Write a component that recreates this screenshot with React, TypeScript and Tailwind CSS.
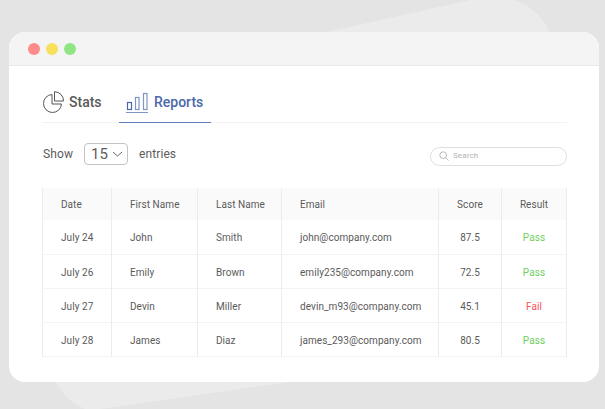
import React from 'react';

const rows = [
  { date: 'July 24', first: 'John', last: 'Smith', email: 'john@company.com', score: '87.5', result: 'Pass' },
  { date: 'July 26', first: 'Emily', last: 'Brown', email: 'emily235@company.com', score: '72.5', result: 'Pass' },
  { date: 'July 27', first: 'Devin', last: 'Miller', email: 'devin_m93@company.com', score: '45.1', result: 'Fail' },
  { date: 'July 28', first: 'James', last: 'Diaz', email: 'james_293@company.com', score: '80.5', result: 'Pass' },
];

const PieIcon = () => (
  <svg width="22" height="22" viewBox="0 0 22 22" fill="none" stroke="#555" strokeWidth="1">
    <path d="M9 3.500a9 9 0 1 0 9.500 9.500h-9.500z" />
    <path d="M11.500 0.700a9 9 0 0 1 9 9.300h-9z" />
  </svg>
);

const BarsIcon = () => (
  <svg width="23" height="21" viewBox="0 0 23 21" fill="none" stroke="#4a68a8" strokeWidth="1.200">
    <rect x="1.500" y="10.500" width="4" height="7" />
    <rect x="9.500" y="5.500" width="3.500" height="12" stroke="#7f94c2" />
    <rect x="17.500" y="1.500" width="3.500" height="16" stroke="#7f94c2" />
    <path d="M0 20.500h22" stroke="#7f94c2" />
  </svg>
);

export default function App() {
  return (
    <div className="relative w-[605px] h-[409px] overflow-hidden bg-[#e4e4e4] pt-[32px] pl-[9px] font-['Roboto',sans-serif]">
      {/* big pale shape behind the window */}
      <svg className="absolute left-0 top-0" width="605" height="409" viewBox="0 0 605 409">
        <path d="M300 38L470 0h45Q545 12 552 40V382H290L100 409H85Q64 400 55 380Z" fill="#ebebeb" />
      </svg>

      <div className="relative w-[590px] h-[350px] rounded-[16px] bg-white overflow-hidden">
        <div className="h-[34px] bg-[#f4f4f4] border-b border-[#e8e8e8] flex items-center gap-[6px] pl-[19px] pt-[1px]">
          <span className="w-[12px] h-[12px] rounded-full bg-[#ff8a8a]" />
          <span className="w-[12px] h-[12px] rounded-full bg-[#f6e05e]" />
          <span className="w-[12px] h-[12px] rounded-full bg-[#90e585]" />
        </div>

        <div className="pl-[33px] pr-[32px]">
          <div className="h-[57px] border-b border-[#f2f2f2] flex items-end">
            <div className="flex items-center gap-[4px] h-[57px] w-[77px] pl-[1px] pt-[17px] text-[14px] font-medium text-[#5a5a5a]">
              <PieIcon />
              <span className="pt-[1px]">Stats</span>
            </div>
            <div className="flex items-center gap-[5px] h-[58px] -mb-px w-[92px] pl-[7px] pt-[17px] border-b-[1.5px] border-[#5f7db8] text-[14px] font-medium text-[#4a68a8]">
              <BarsIcon />
              <span className="pt-[1px]">Reports</span>
            </div>
          </div>

          <div className="flex items-center justify-between h-[65px] pb-[3px] text-[12px] text-[#5c5c5c] tracking-[0.1px]">
            <div className="flex items-center">
              <span className="w-[42px] pl-[1px]">Show</span>
              <div className="flex items-center justify-between w-[44px] h-[22px] rounded-[4px] border border-[#c4c4c4] pl-[6px] pr-[4px] text-[15px]">
                <span>15</span>
                <svg width="11" height="10" viewBox="0 0 11 10" fill="none" stroke="#666" strokeWidth="1"><path d="M1 3l4.500 4 4.500-4" /></svg>
              </div>
              <span className="ml-[11px]">entries</span>
            </div>
            <div className="flex items-center gap-[4px] w-[137px] h-[19px] mt-[4px] rounded-full border border-[#dfdfdf] pl-[8px] text-[8px] text-[#b4b4b4]">
              <svg width="10" height="10" viewBox="0 0 10 10" fill="none" stroke="#aaa" strokeWidth="0.800"><circle cx="4.200" cy="4.200" r="3.400" /><path d="M6.800 6.800L9.500 9.500" /></svg>
              <span>Search</span>
            </div>
          </div>

          <table className="table-fixed border-collapse w-[524px] text-[10px] text-[#5a5a5a] tracking-[0.06px]">
            <colgroup>
              <col className="w-[69px]" />
              <col className="w-[86px]" />
              <col className="w-[84px]" />
              <col className="w-[157px]" />
              <col className="w-[63px]" />
              <col className="w-[65px]" />
            </colgroup>
            <thead>
              <tr className="h-[32px] bg-[#fafafa]">
                <th className="border-x border-[#ececec] pl-[18px] pt-[1px] text-left font-normal">Date</th>
                <th className="border-x border-[#ececec] pl-[18px] pt-[1px] text-left font-normal">First Name</th>
                <th className="border-x border-[#ececec] pl-[18px] pt-[1px] text-left font-normal">Last Name</th>
                <th className="border-x border-[#ececec] pl-[18px] pt-[1px] text-left font-normal">Email</th>
                <th className="border-x border-[#ececec] pt-[1px] text-center font-normal">Score</th>
                <th className="border-x border-[#ececec] pt-[1px] text-center font-normal">Result</th>
              </tr>
            </thead>
            <tbody>
              {rows.map((r) => (
                <tr key={r.date} className="h-[34px] border-b border-[#f4f4f4]">
                  <td className="border-x border-[#ececec] pl-[18px] pt-[2px]">{r.date}</td>
                  <td className="border-x border-[#ececec] pl-[18px] pt-[2px]">{r.first}</td>
                  <td className="border-x border-[#ececec] pl-[18px] pt-[2px]">{r.last}</td>
                  <td className="border-x border-[#ececec] pl-[18px] pt-[2px]">{r.email}</td>
                  <td className="border-x border-[#ececec] pt-[2px] text-center">{r.score}</td>
                  <td className={r.result === 'Pass' ? 'border-x border-[#ececec] pt-[2px] text-center text-[#6fcf5f]' : 'border-x border-[#ececec] pt-[2px] text-center text-[#f4515d]'}>{r.result}</td>
                </tr>
              ))}
            </tbody>
          </table>
        </div>
      </div>
    </div>
  );
}
